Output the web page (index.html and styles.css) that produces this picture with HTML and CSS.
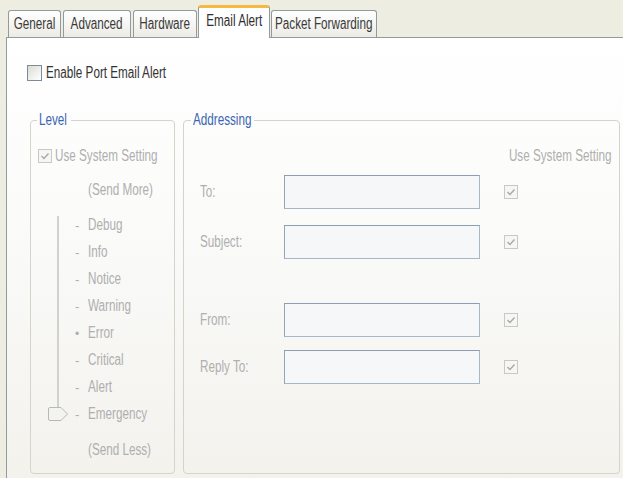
FILE: index.html
```html
<!DOCTYPE html>
<html lang="en">
<head>
    <meta charset="UTF-8">
    <title>Email Alert</title>
    <link rel="stylesheet" href="styles.css">
</head>
<body>

    <!-- Вкладки -->
    <div class="tabs">
        <div class="tab tab-general"><span class="t">General</span></div>
        <div class="tab tab-advanced"><span class="t">Advanced</span></div>
        <div class="tab tab-hardware"><span class="t">Hardware</span></div>
        <div class="tab tab-email active"><span class="t">Email Alert</span></div>
        <div class="tab tab-packet"><span class="t">Packet Forwarding</span></div>
    </div>

    <div class="panel">
        <label class="check-row">
            <span class="box"></span>
            <span class="t">Enable Port Email Alert</span>
        </label>

        <div class="groups">
            <!-- Уровень -->
            <fieldset class="group level">
                <legend><span class="t">Level</span></legend>
                <div class="check-row disabled">
                    <span class="box small">
                        <svg width="12" height="12" viewBox="0 0 12 12"><path d="M2.5 6 L5 8.5 L9.5 3.5" fill="none" stroke="#a9a9a9" stroke-width="1.4"/></svg>
                    </span>
                    <span class="t">Use System Setting</span>
                </div>
                <div class="note"><span class="t">(Send More)</span></div>
                <div class="slider">
                    <div class="track">
                        <div class="line"></div>
                        <svg class="thumb" width="22" height="16" viewBox="0 0 22 16">
                            <path d="M1.5 3 Q1.5 1.5 3 1.5 H14 L20.5 8 L14 14.5 H3 Q1.5 14.5 1.5 13 Z" fill="#f3f3ef" stroke="#b9b9b4"/>
                        </svg>
                    </div>
                    <ul class="levels">
                        <li><span class="tick">-</span><span class="t">Debug</span></li>
                        <li><span class="tick">-</span><span class="t">Info</span></li>
                        <li><span class="tick">-</span><span class="t">Notice</span></li>
                        <li><span class="tick">-</span><span class="t">Warning</span></li>
                        <li><span class="tick dot">•</span><span class="t">Error</span></li>
                        <li><span class="tick">-</span><span class="t">Critical</span></li>
                        <li><span class="tick">-</span><span class="t">Alert</span></li>
                        <li><span class="tick">-</span><span class="t">Emergency</span></li>
                    </ul>
                </div>
                <div class="note less"><span class="t">(Send Less)</span></div>
            </fieldset>

            <!-- Адресация -->
            <fieldset class="group addressing">
                <legend><span class="t">Addressing</span></legend>
                <div class="sys-head"><span class="t">Use System Setting</span></div>

                <div class="field first">
                    <span class="field-label"><span class="t">To:</span></span>
                    <input type="text" disabled>
                    <span class="box small"><svg width="12" height="12" viewBox="0 0 12 12"><path d="M2.5 6 L5 8.5 L9.5 3.5" fill="none" stroke="#a9a9a9" stroke-width="1.4"/></svg></span>
                </div>
                <div class="field subject">
                    <span class="field-label"><span class="t">Subject:</span></span>
                    <input type="text" disabled>
                    <span class="box small"><svg width="12" height="12" viewBox="0 0 12 12"><path d="M2.5 6 L5 8.5 L9.5 3.5" fill="none" stroke="#a9a9a9" stroke-width="1.4"/></svg></span>
                </div>
                <div class="field from">
                    <span class="field-label"><span class="t">From:</span></span>
                    <input type="text" disabled>
                    <span class="box small"><svg width="12" height="12" viewBox="0 0 12 12"><path d="M2.5 6 L5 8.5 L9.5 3.5" fill="none" stroke="#a9a9a9" stroke-width="1.4"/></svg></span>
                </div>
                <div class="field reply">
                    <span class="field-label"><span class="t">Reply To:</span></span>
                    <input type="text" disabled>
                    <span class="box small"><svg width="12" height="12" viewBox="0 0 12 12"><path d="M2.5 6 L5 8.5 L9.5 3.5" fill="none" stroke="#a9a9a9" stroke-width="1.4"/></svg></span>
                </div>
            </fieldset>
        </div>
    </div>

</body>
</html>
```

FILE: styles.css
```css
/* Основные стили */
:root {
    --tab-border: #919b9c;
    --group-border: #d6d4c8;
    --disabled-text: #afafaf;
    --legend-color: #3b66b3;
}

* {
    box-sizing: border-box;
}

body {
    margin: 0;
    height: 100vh;
    overflow: hidden;
    background: #eeede1;
    font-family: "Liberation Sans", Arial, sans-serif;
    font-size: 16px;
    color: #333;
}

/* Узкий шрифт, как в старом интерфейсе */
.t {
    display: inline-block;
    white-space: nowrap;
    transform: scaleX(0.73);
    transform-origin: 0 50%;
}

/* Вкладки */
.tabs {
    display: flex;
    align-items: flex-end;
    gap: 2px;
    height: 37px;
    padding-left: 8px;
}

.tab {
    display: flex;
    justify-content: center;
    align-items: center;
    height: 27px;
    padding-bottom: 1px;
    border: 1px solid var(--tab-border);
    border-bottom: none;
    border-radius: 3px 3px 0 0;
    background: linear-gradient(#ffffff, #ecebe5);
    color: #3a3a3a;
}

.tab .t {
    transform-origin: 50% 50%;
}

.tab-general { width: 53px; }
.tab-advanced { width: 68px; }
.tab-hardware { width: 64px; }
.tab-email { width: 72px; }
.tab-packet { width: 106px; }

.tab.active {
    position: relative;
    z-index: 1;
    height: 33px;
    margin: 0 -1px -1px -1px;
    padding-bottom: 4px;
    background: #ffffff;
    border-top: 3px solid #f5b942;
    color: #2e2e2e;
}

.panel {
    height: calc(100vh - 37px);
    margin-left: 6px;
    padding: 26px 0 0 20px;
    border-top: 1px solid var(--tab-border);
    border-left: 1px solid var(--tab-border);
    background: linear-gradient(#ffffff 0%, #fbfbfa 40%, #f3f2ed 100%);
}

/* Флажки */
.check-row {
    display: flex;
    align-items: center;
    gap: 4px;
    height: 18px;
}

.check-row.disabled {
    gap: 3px;
    color: var(--disabled-text);
}

.box {
    display: inline-flex;
    flex-shrink: 0;
    align-items: center;
    justify-content: center;
    width: 15px;
    height: 16px;
    border: 1px solid #7d8a99;
    background: linear-gradient(135deg, #dcdcd4, #ffffff);
}

.box.small {
    width: 14px;
    height: 14px;
    border-color: #c9c9c4;
    background: #f6f6f3;
}

/* Группы */
.groups {
    display: flex;
    gap: 8px;
    margin: 30px 0 0 3px;
}

.group {
    flex-shrink: 0;
    min-width: 0;
    margin: 0;
    height: 362px;
    padding: 19px 0 0 7px;
    border: 1px solid var(--group-border);
    border-radius: 4px;
    color: var(--disabled-text);
}

.group legend {
    padding: 0 2px;
    line-height: 16px;
    color: var(--legend-color);
}

.level legend {
    width: 34px;
    margin-left: -1px;
}

.addressing legend {
    width: 63px;
    margin-left: -9px;
}

.level {
    width: 145px;
}

.addressing {
    width: 437px;
    padding: 19px 8px 0 16px;
}

.note {
    margin: 16px 0 0 50px;
    line-height: 18px;
}

.note.less {
    margin-top: 14px;
}

/* Ползунок уровня */
.slider {
    display: flex;
    margin: 12px 0 0 9px;
}

.track {
    display: flex;
    flex-direction: column;
    align-items: center;
    width: 21px;
    padding: 5px 0 5px;
}

.line {
    flex: 1;
    width: 2px;
    background: #d2d2cd;
}

.thumb {
    display: block;
    margin-top: -1px;
}

.levels {
    list-style: none;
    margin: 0 0 0 7px;
    padding: 0;
}

.levels li {
    height: 27px;
    line-height: 27px;
}

.tick {
    display: inline-block;
    width: 13px;
    font-size: 13px;
}

.tick.dot {
    font-size: 12px;
}

/* Поля адресации */
.sys-head {
    text-align: right;
    line-height: 18px;
}

.sys-head .t {
    transform-origin: 100% 50%;
}

.field {
    display: flex;
    align-items: center;
    height: 34px;
}

.field.first {
    margin-top: 10px;
}

.field.subject {
    margin-top: 16px;
}

.field.from {
    margin-top: 44px;
}

.field.reply {
    margin-top: 13px;
}

.field-label {
    width: 84px;
    flex-shrink: 0;
}

.field input {
    flex-shrink: 0;
    width: 196px;
    height: 34px;
    margin: 0 24px 0 0;
    border: 1px solid #a7b6c9;
    border-top-color: #8d9db2;
    border-left-color: #93a3b8;
    background: #f5f7f8;
}
```
